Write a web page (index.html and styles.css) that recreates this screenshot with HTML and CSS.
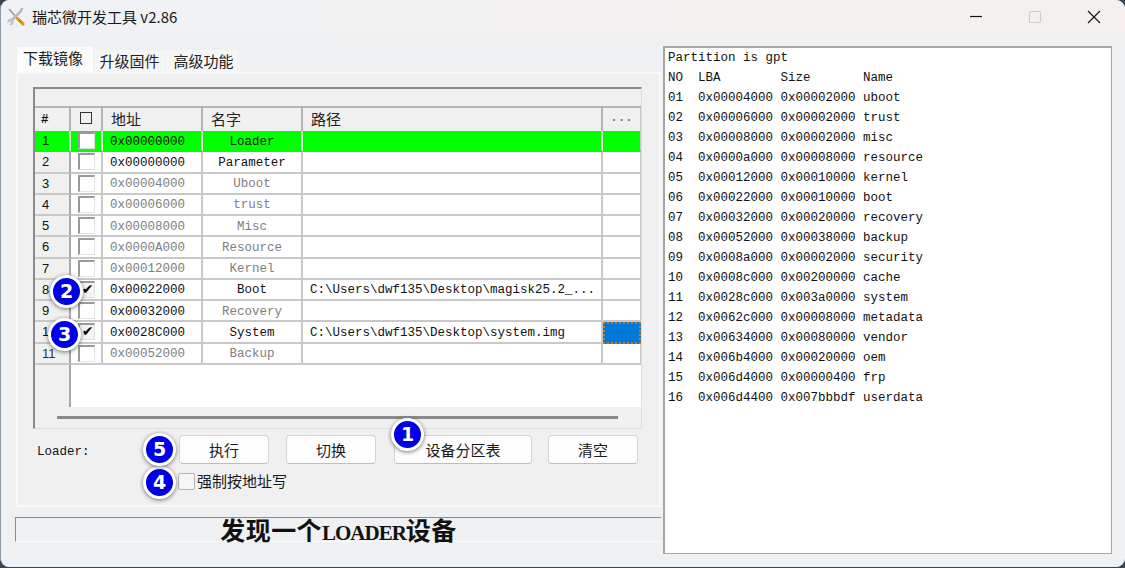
FILE: index.html
```
<!DOCTYPE html>
<html lang="zh-CN">
<head>
<meta charset="utf-8">
<title>瑞芯微开发工具</title>
<link rel="stylesheet" href="styles.css">
</head>
<body>
<div class="window">
  <header class="titlebar">
    <svg class="app-icon" width="20" height="20" viewBox="0 0 20 20">
      <path d="M3 2 L10 10" stroke="#9a9a9a" stroke-width="1.6"/>
      <path d="M9 9 L12 12" stroke="#555" stroke-width="2"/>
      <path d="M11.5 11.5 L17 17" stroke="#e0a010" stroke-width="3.2" stroke-linecap="round"/>
      <path d="M13 13 L16 16" stroke="#333" stroke-width="1" stroke-dasharray="1 1"/>
      <path d="M15.5 3.5 L6 13" stroke="#b8b8b8" stroke-width="2.6"/>
      <path d="M17.5 1.5 L15.5 3.8 L14 3 L15.5 0.8 Z" fill="#a8a8a8"/>
      <circle cx="4.5" cy="15" r="3.2" fill="#c4c4c4"/>
      <path d="M1.5 18 L4.5 15" stroke="#f4f2f1" stroke-width="2"/>
    </svg>
    <span class="title">瑞芯微开发工具 v2.86</span>
    <div class="controls">
      <svg class="ctl" width="14" height="14" viewBox="0 0 14 14"><path d="M1 6.5H13" stroke="#111" stroke-width="1.2"/></svg>
      <svg class="ctl" width="14" height="14" viewBox="0 0 14 14"><rect x="1.5" y="1.5" width="11" height="11" rx="1.5" fill="none" stroke="#cdcaca" stroke-width="1.2"/></svg>
      <svg class="ctl" width="14" height="14" viewBox="0 0 14 14"><path d="M1 1L13 13M13 1L1 13" stroke="#111" stroke-width="1.1"/></svg>
    </div>
  </header>

  <div class="content">
    <section class="left">
      <nav class="tabs">
        <span class="tab tab-active">下载镜像</span>
        <span class="tab">升级固件</span>
        <span class="tab tab-last">高级功能</span>
      </nav>
      <div class="panel">
        <div class="frame">
          <div class="band"></div>
          <div class="row head">
            <div class="cell hash">#</div>
            <div class="cell cjk-center"><span class="head-box"></span></div>
            <div class="cell cjk-left">地址</div>
            <div class="cell cjk-left">名字</div>
            <div class="cell cjk-left">路径</div>
            <div class="cell dots">...</div>
          </div>
          <div class="row green">
            <div class="cell num">1</div><div class="cell chk"><span class="box"></span></div>
            <div class="cell addr">0x00000000</div><div class="cell name">Loader</div><div class="cell path"></div><div class="cell"></div>
          </div>
          <div class="row">
            <div class="cell num">2</div><div class="cell chk"><span class="box"></span></div>
            <div class="cell addr">0x00000000</div><div class="cell name">Parameter</div><div class="cell path"></div><div class="cell"></div>
          </div>
          <div class="row off">
            <div class="cell num">3</div><div class="cell chk"><span class="box"></span></div>
            <div class="cell addr">0x00004000</div><div class="cell name">Uboot</div><div class="cell path"></div><div class="cell"></div>
          </div>
          <div class="row off">
            <div class="cell num">4</div><div class="cell chk"><span class="box"></span></div>
            <div class="cell addr">0x00006000</div><div class="cell name">trust</div><div class="cell path"></div><div class="cell"></div>
          </div>
          <div class="row off">
            <div class="cell num">5</div><div class="cell chk"><span class="box"></span></div>
            <div class="cell addr">0x00008000</div><div class="cell name">Misc</div><div class="cell path"></div><div class="cell"></div>
          </div>
          <div class="row off">
            <div class="cell num">6</div><div class="cell chk"><span class="box"></span></div>
            <div class="cell addr">0x0000A000</div><div class="cell name">Resource</div><div class="cell path"></div><div class="cell"></div>
          </div>
          <div class="row off">
            <div class="cell num">7</div><div class="cell chk"><span class="box"></span></div>
            <div class="cell addr">0x00012000</div><div class="cell name">Kernel</div><div class="cell path"></div><div class="cell"></div>
          </div>
          <div class="row">
            <div class="cell num">8</div><div class="cell chk"><span class="box checked">✔</span></div>
            <div class="cell addr">0x00022000</div><div class="cell name">Boot</div><div class="cell path">C:\Users\dwf135\Desktop\magisk25.2_...</div><div class="cell"></div>
          </div>
          <div class="row">
            <div class="cell num">9</div><div class="cell chk"><span class="box"></span></div>
            <div class="cell addr">0x00032000</div><div class="cell name name-off">Recovery</div><div class="cell path"></div><div class="cell"></div>
          </div>
          <div class="row">
            <div class="cell num">10</div><div class="cell chk"><span class="box checked">✔</span></div>
            <div class="cell addr">0x0028C000</div><div class="cell name">System</div><div class="cell path">C:\Users\dwf135\Desktop\system.img</div><div class="cell picked"></div>
          </div>
          <div class="row off">
            <div class="cell num num-on">11</div><div class="cell chk"><span class="box"></span></div>
            <div class="cell addr">0x00052000</div><div class="cell name">Backup</div><div class="cell path"></div><div class="cell"></div>
          </div>
          <div class="blank"><div class="blank-gutter"></div><div class="blank-fill"></div></div>
          <div class="hscroll"><div class="hbar"></div></div>
        </div>

        <div class="actions">
          <span class="loader">Loader:</span>
          <div class="buttons">
            <button class="btn">执行</button>
            <button class="btn">切换</button>
            <button class="btn btn-wide">设备分区表</button>
            <button class="btn">清空</button>
          </div>
        </div>
        <label class="force"><span class="force-box"></span>强制按地址写</label>
      </div>
      <div class="status"><span class="status-text">发现一个<span class="status-latin">LOADER</span>设备</span></div>
    </section>

    <pre class="log">Partition is gpt
NO  LBA        Size       Name
01  0x00004000 0x00002000 uboot
02  0x00006000 0x00002000 trust
03  0x00008000 0x00002000 misc
04  0x0000a000 0x00008000 resource
05  0x00012000 0x00010000 kernel
06  0x00022000 0x00010000 boot
07  0x00032000 0x00020000 recovery
08  0x00052000 0x00038000 backup
09  0x0008a000 0x00002000 security
10  0x0008c000 0x00200000 cache
11  0x0028c000 0x003a0000 system
12  0x0062c000 0x00008000 metadata
13  0x00634000 0x00080000 vendor
14  0x006b4000 0x00020000 oem
15  0x006d4000 0x00000400 frp
16  0x006d4400 0x007bbbdf userdata</pre>
  </div>
</div>

<span class="badge badge-1">1</span>
<span class="badge badge-2">2</span>
<span class="badge badge-3">3</span>
<span class="badge badge-4">4</span>
<span class="badge badge-5">5</span>
</body>
</html>
```
FILE: styles.css
```
* { box-sizing: border-box; }
html, body { margin: 0; height: 568px; overflow: hidden; background: #3d4650; }
body { position: relative; font-family: "Liberation Mono", "Noto Sans CJK SC", monospace; color: #111; }

.window {
  width: 1125px; height: 567px;
  background: #f0f0f0;
  border-left: 1px solid #8e9aa6;
  border-radius: 9px 9px 9px 9px;
  overflow: hidden;
  display: flex; flex-direction: column;
}

.titlebar {
  height: 33px; flex: none;
  display: flex; align-items: center;
  padding-left: 5px;
  background: linear-gradient(90deg, #eef2f6 0%, #f2f1f1 40%, #f5f0ee 100%);
}
.app-icon { flex: none; }
.title { margin-left: 6px; font: 15px "Noto Sans CJK SC", "Liberation Sans", sans-serif; color: #1a1a1a; }
.controls { margin-left: auto; display: flex; gap: 45px; padding-right: 24px; }
.ctl { display: block; }

.content { flex: 1; display: flex; padding: 13px 12px 12px 15px; background: #eff0f1; }
.left { width: 646px; flex: none; display: flex; flex-direction: column; padding-top: 1px; }

.tabs { height: 25px; flex: none; display: flex; align-items: flex-end; padding-left: 1px; }
.tab {
  width: 71px; height: 22px; margin-right: 1px;
  font: 15px/22px "Noto Sans CJK SC", sans-serif;
  text-align: center; background: #f5f5f5; color: #222;
}
.tab-active { width: 76px; height: 25px; line-height: 22px; background: #fbfbfb; padding-right: 4px; }
.tab-last { width: 73px; padding-left: 2px; }

.panel {
  width: 645px; height: 435px; flex: none;
  background: #f0f0f0;
  border: 2px solid #f9f9f9;
  padding: 13px 16px 0 15px;
  display: flex; flex-direction: column;
}

.frame {
  width: 609px; height: 342px; flex: none;
  border: 2px solid #8a8a8a;
  border-right: 1px solid #dedede;
  border-bottom: 1px solid #dedede;
  display: flex; flex-direction: column;
  background: #fff;
}
.band { height: 19px; flex: none; background: #f0f0f0; border-bottom: 2px solid #b4b4b4; }

.row {
  height: 21.25px; flex: none;
  display: grid;
  grid-template-columns: 36px 32px 100px 100px 300px 38px;
  font-size: 12.5px;
}
.cell {
  display: flex; align-items: center;
  border-right: 2px solid #c8c8c8;
  border-bottom: 2px solid #c8c8c8;
  overflow: hidden; white-space: nowrap;
}
.row .cell:last-child { border-right: 1px solid #c8c8c8; }

.head { height: 23px; background: #f0f0f0; font-size: 15px; }
.head .cell { border-bottom: 0; border-right-color: #b4b4b4; padding-bottom: 3px; }
.head .hash { padding: 0 0 0 6px; font-weight: bold; font-size: 12.5px; }
.cjk-center { justify-content: center; }
.cjk-left { font-family: "Noto Sans CJK SC", sans-serif; padding-left: 8px; color: #222; }
.dots { justify-content: center; color: #555; font-size: 12.5px; }
.head-box { width: 12px; height: 12px; border: 1.5px solid #333; }

.num { background: #f0f0f0; padding-left: 7px; font-family: "Liberation Sans", sans-serif; font-size: 13px; border-right-color: #a8a8a8; }
.chk { justify-content: center; }
.addr { padding: 2px 0 0 7px; }
.name { justify-content: center; color: #111; padding-top: 2px; }
.name-off { color: #808080; }
.path { padding: 2px 0 0 7px; }
.off .addr, .off .name { color: #808080; }
.num-on { color: #333; }

.box {
  width: 17px; height: 17px; background: #fff;
  border-top: 2px solid #9a9a9a; border-left: 2px solid #9a9a9a;
  border-right: 1px solid #e2e2e2; border-bottom: 1px solid #e2e2e2;
  display: flex; align-items: flex-start; justify-content: flex-end;
  font: 14px/12px "DejaVu Sans", sans-serif; color: #000;
}
.checked { background: #f4f4f4; }
.green { background: #00ff00; }
.green .num { background: #00ff00; }
.green .cell { border-color: #d8f0d8; border-bottom-color: #00ff00; }
.picked { background: #0078d7; border: 2px dotted #c67a20 !important; }

.blank { flex: 1; display: flex; }
.blank-gutter { width: 36px; background: #f0f0f0; border-right: 2px solid #a8a8a8; }
.blank-fill { flex: 1; background: #fff; }
.hscroll { height: 21px; flex: none; background: #f0f0f0; padding: 9px 23px 0 22px; }
.hbar { height: 3px; background: #8a8a8a; }

.actions { height: 34px; flex: none; margin-top: 3px; display: flex; align-items: center; }
.loader { margin-left: 4px; width: 142px; font-size: 12.5px; padding-top: 5px; flex: none; }
.buttons { display: flex; align-items: center; }
.btn {
  width: 90px; height: 29px; margin-right: 17px; padding: 0; flex: none;
  background: #fdfdfd; border: 1px solid #d4d4d4; border-bottom-color: #bdbdbd; border-radius: 4px;
  font: 15px "Noto Sans CJK SC", sans-serif; color: #1a1a1a;
}
.btn:nth-child(2) { margin-right: 18px; }
.btn-wide { width: 138px; margin-right: 16px; }

.force {
  display: flex; align-items: center; gap: 2px;
  margin: 5px 0 0 145px;
  font: 15px/20px "Noto Sans CJK SC", sans-serif; color: #1a1a1a;
}
.force-box { width: 17px; height: 17px; background: #f6f6f6; border: 1px solid #b5b5b5; border-radius: 2px; }

.status {
  width: 646px; height: 25px; flex: none; margin: 10px 0 0 -1px;
  border: 1px solid #8c8c8c; border-right: 0;
  border-bottom: 1px solid #fbfbfb;
  display: flex; justify-content: center;
  text-align: center;
}
.status-text { font: bold 25px/23px "Noto Sans CJK SC", serif; color: #111; letter-spacing: .4px; }
.status-latin { font: bold 21px "Liberation Serif", serif; letter-spacing: -1px; }

.log {
  width: 449px; height: 508px; flex: none;
  margin: 0 0 0 1px;
  background: #fff;
  border: 2px solid #a6a6a6;
  border-right-width: 1px;
  border-bottom-width: 1px;
  padding: 0 0 0 3px;
  font: 12.5px/20px "Liberation Mono", monospace;
  color: #111;
  overflow: hidden;
}

.badge {
  position: absolute;
  width: 33px; height: 33px; border-radius: 50%;
  background: #0000e6; border: 3px solid #fff;
  box-shadow: 0 1px 4px rgba(0,0,0,.55);
  color: #fff; text-align: center;
  font: bold 19px/27px "DejaVu Sans", sans-serif;
}
.badge-1 { left: 391px; top: 418px; }
.badge-2 { left: 50px; top: 275px; }
.badge-3 { left: 48px; top: 318px; }
.badge-4 { left: 143px; top: 466px; }
.badge-5 { left: 143px; top: 433px; }
```
